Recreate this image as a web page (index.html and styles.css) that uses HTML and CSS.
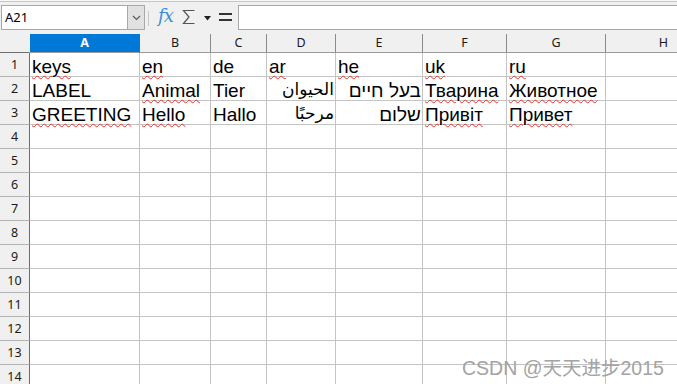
FILE: index.html
```html
<!DOCTYPE html>
<html>
<head>
<meta charset="utf-8">
<link rel="stylesheet" href="styles.css">
</head>
<body>
<div class="app">
  <div class="toolbar">
    <div class="namebox">
      <span class="namebox-text">A21</span>
      <span class="namebox-btn"><svg width="9" height="6" viewBox="0 0 9 6"><polyline points="1,1 4.5,4.5 8,1" fill="none" stroke="#555" stroke-width="1.1"/></svg></span>
    </div>
    <span class="tsep"></span>
    <span class="fx">fx</span>
    <svg class="sigma" width="13" height="16" viewBox="0 0 13 16"><polyline points="12.5,1.5 1.5,1.5 7,8 1.5,14.5 12.5,14.5" fill="none" stroke="#555" stroke-width="1.2"/></svg>
    <svg class="caret" width="7" height="5" viewBox="0 0 7 5"><polygon points="0,0 7,0 3.5,4.5" fill="#222"/></svg>
    <span class="equals"><i></i><i></i></span>
    <div class="formula"></div>
  </div>
  <div class="sheet">
    <div class="corner"></div>
    <div class="ch active">A</div><div class="ch">B</div><div class="ch">C</div><div class="ch">D</div><div class="ch">E</div><div class="ch">F</div><div class="ch">G</div><div class="ch last">H</div>

    <div class="rh">1</div>
    <div class="c"><span class="sp">keys</span></div><div class="c"><span class="sp">en</span></div><div class="c">de</div><div class="c"><span class="sp">ar</span></div><div class="c"><span class="sp">he</span></div><div class="c"><span class="sp">uk</span></div><div class="c"><span class="sp">ru</span></div><div class="c"></div>

    <div class="rh">2</div>
    <div class="c">LABEL</div><div class="c"><span class="sp">Animal</span></div><div class="c">Tier</div><div class="c r ar" dir="rtl">الحيوان</div><div class="c r he" dir="rtl">בעל חיים</div><div class="c"><span class="sp">Тварина</span></div><div class="c"><span class="sp">Животное</span></div><div class="c"></div>

    <div class="rh">3</div>
    <div class="c"><span class="sp">GREETING</span></div><div class="c"><span class="sp">Hello</span></div><div class="c">Hallo</div><div class="c r ar" dir="rtl">مرحبًا</div><div class="c r he" dir="rtl">שלום</div><div class="c"><span class="sp">Привіт</span></div><div class="c"><span class="sp">Привет</span></div><div class="c"></div>

    <div class="rh">4</div><div class="c"></div><div class="c"></div><div class="c"></div><div class="c"></div><div class="c"></div><div class="c"></div><div class="c"></div><div class="c"></div>
    <div class="rh">5</div><div class="c"></div><div class="c"></div><div class="c"></div><div class="c"></div><div class="c"></div><div class="c"></div><div class="c"></div><div class="c"></div>
    <div class="rh">6</div><div class="c"></div><div class="c"></div><div class="c"></div><div class="c"></div><div class="c"></div><div class="c"></div><div class="c"></div><div class="c"></div>
    <div class="rh">7</div><div class="c"></div><div class="c"></div><div class="c"></div><div class="c"></div><div class="c"></div><div class="c"></div><div class="c"></div><div class="c"></div>
    <div class="rh">8</div><div class="c"></div><div class="c"></div><div class="c"></div><div class="c"></div><div class="c"></div><div class="c"></div><div class="c"></div><div class="c"></div>
    <div class="rh">9</div><div class="c"></div><div class="c"></div><div class="c"></div><div class="c"></div><div class="c"></div><div class="c"></div><div class="c"></div><div class="c"></div>
    <div class="rh">10</div><div class="c"></div><div class="c"></div><div class="c"></div><div class="c"></div><div class="c"></div><div class="c"></div><div class="c"></div><div class="c"></div>
    <div class="rh">11</div><div class="c"></div><div class="c"></div><div class="c"></div><div class="c"></div><div class="c"></div><div class="c"></div><div class="c"></div><div class="c"></div>
    <div class="rh">12</div><div class="c"></div><div class="c"></div><div class="c"></div><div class="c"></div><div class="c"></div><div class="c"></div><div class="c"></div><div class="c"></div>
    <div class="rh">13</div><div class="c"></div><div class="c"></div><div class="c"></div><div class="c"></div><div class="c"></div><div class="c"></div><div class="c"></div><div class="c"></div>
    <div class="rh">14</div><div class="c"></div><div class="c"></div><div class="c"></div><div class="c"></div><div class="c"></div><div class="c"></div><div class="c"></div><div class="c"></div>
  </div>
  <div class="watermark">CSDN @天天进步2015</div>
</div>
</body>
</html>
```

FILE: styles.css
```css
html, body {
  margin: 0;
  padding: 0;
  background: #ffffff;
}
.app {
  position: relative;
  width: 677px;
  height: 384px;
  overflow: hidden;
  background: #f0f0f0;
}
.toolbar {
  height: 34px;
  box-sizing: border-box;
  border-top: 1px solid #f7f7f7;
  box-shadow: inset 0 1px 0 #c6c6c6;
  padding: 4px 0 0 1px;
  display: flex;
  align-items: flex-start;
  background: #f0f0f0;
}
.namebox {
  width: 144px;
  height: 25px;
  box-sizing: border-box;
  border: 1px solid #a8a8a8;
  background: #fff;
  display: flex;
  align-items: stretch;
}
.namebox-text {
  flex: 1;
  font-family: "Noto Sans", sans-serif;
  font-size: 13px;
  line-height: 22px;
  padding-left: 3px;
  color: #000;
}
.namebox-btn {
  width: 16px;
  background: #e1e1e1;
  border-left: 1px solid #a8a8a8;
  display: flex;
  align-items: center;
  justify-content: center;
}
.tsep {
  width: 1px;
  height: 15px;
  background: #c8c8c8;
  margin: 6px 0 0 3px;
}
.fx {
  font-family: "DejaVu Serif", "Liberation Serif", serif;
  font-style: italic;
  font-size: 18px;
  color: #3b8ed8;
  line-height: 22px;
  margin-left: 9px;
  letter-spacing: -1px;
}
.sigma {
  margin: 4px 0 0 9px;
}
.caret {
  margin: 11px 0 0 9px;
}
.equals {
  display: flex;
  flex-direction: column;
  gap: 4px;
  margin: 8px 0 0 8px;
}
.equals i {
  display: block;
  width: 13px;
  height: 2px;
  background: #333;
}
.formula {
  flex: 1;
  height: 25px;
  box-sizing: border-box;
  border: 1px solid #a8a8a8;
  border-right: none;
  background: #fff;
  margin-left: 6px;
}
.sheet {
  display: grid;
  grid-template-columns: 30px 110px 71px 56px 69px 87px 84px 99px 115px;
  grid-template-rows: 19px repeat(14, 24px);
  background: #fff;
}
.sheet > div {
  box-sizing: border-box;
}
.corner {
  background: #f0f0f0;
  border-right: 1px solid #f0f0f0;
  border-bottom: 1px solid #6e6e6e;
}
.ch {
  background: #f0f0f0;
  border-right: 1px solid #8a8a8a;
  border-bottom: 1px solid #9a9a9a;
  font-family: "Noto Sans", sans-serif;
  font-size: 12.5px;
  color: #1a1a1a;
  display: flex;
  align-items: center;
  justify-content: center;
  padding-bottom: 1px;
}
.ch.active {
  background: #0078d7;
  color: #fff;
  font-weight: bold;
  border-right-color: #0078d7;
}
.ch.last {
  border-right: none;
}
.rh {
  background: #f0f0f0;
  border-right: 1px solid #6e6e6e;
  border-bottom: 1px solid #b4b4b4;
  font-family: "Noto Sans", sans-serif;
  font-size: 12.5px;
  color: #1a1a1a;
  display: flex;
  align-items: center;
  justify-content: center;
}
.c {
  border-right: 1px solid #c4c4c4;
  border-bottom: 1px solid #c4c4c4;
  font-family: "Liberation Sans", Arial, sans-serif;
  font-size: 19px;
  color: #000;
  display: flex;
  align-items: flex-end;
  padding: 0 2px;
  white-space: nowrap;
  overflow: visible;
  line-height: 19px;
}
.c.r {
  justify-content: flex-start;
  padding: 0 1px 0 2px;
}
.c.ar {
  font-family: "DejaVu Sans", sans-serif;
  font-size: 17px;
  padding-bottom: 1px;
}
.sp {
  text-decoration-line: underline;
  text-decoration-style: wavy;
  text-decoration-color: #e8322e;
  text-decoration-thickness: 1.4px;
  text-underline-offset: 2px;
}
.watermark {
  position: absolute;
  left: 462px;
  top: 352px;
  font-family: "Liberation Sans", "Noto Sans CJK SC", sans-serif;
  font-size: 19.5px;
  color: #a3a3a3;
  white-space: nowrap;
}
```
